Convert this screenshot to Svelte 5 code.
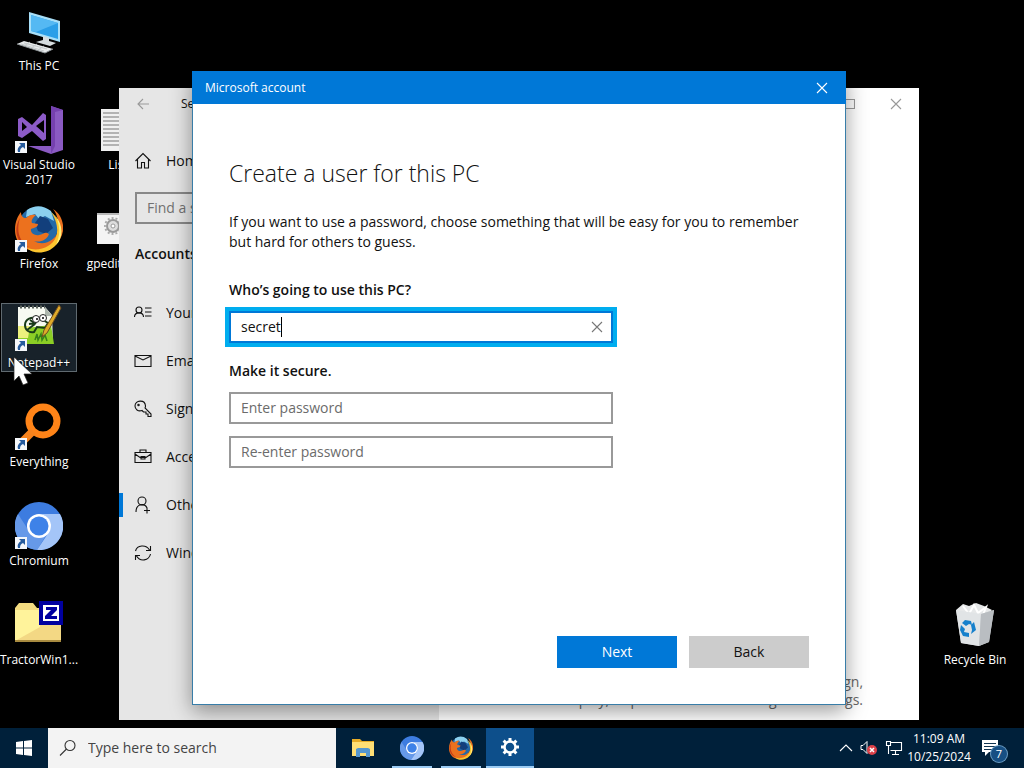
<script>
  const shortcuts = [
    { id: 'pc', label: 'This PC', col: 1, row: 1 },
    { id: 'vs', label: 'Visual Studio 2017', col: 1, row: 2, link: true },
    { id: 'firefox', label: 'Firefox', col: 1, row: 3, link: true },
    { id: 'notepad', label: 'Notepad++', col: 1, row: 4, link: true, selected: true },
    { id: 'everything', label: 'Everything', col: 1, row: 5, link: true },
    { id: 'chromium', label: 'Chromium', col: 1, row: 6, link: true },
    { id: 'folder', label: 'TractorWin1...', col: 1, row: 7 },
    { id: 'list', label: 'List', col: 2, row: 2 },
    { id: 'gpedit', label: 'gpedit-Wi...', col: 2, row: 3 }
  ];
  const nav = [
    { id: 'info', label: 'Your info' },
    { id: 'mail', label: 'Email' },
    { id: 'key', label: 'Sign-in' },
    { id: 'work', label: 'Access' },
    { id: 'other', label: 'Other users', active: true },
    { id: 'sync', label: 'Windows backup' }
  ];
  let name = $state('secret');
  let password = $state('');
  let confirm = $state('');
</script>

{#snippet firefox(size)}
  <svg width={size} height={size} viewBox="0 0 48 48" aria-hidden="true">
    <circle cx="23" cy="22" r="20" fill="#2469a8" />
    <path d="M12 5Q24-3 36 6l3 10-9-5-6 3-4-5-9 3z" fill="#8bd0ef" />
    <path d="M25 11l8 3 5 9-7 6-8-3-3-8z" fill="#123f7c" />
    <path d="M6 7c0 4 2 6 5 6 3-3 6-4 10-3-4 3-5 6-4 8l6 1c0 3-4 4-7 5-1 4 4 7 8 6 5-1 6-4 10-1-2 6-9 9-15 7 10 6 22-1 24-10 2-8-1-17-5-22 8 5 11 14 10 22-2 12-12 19-24 19C9 48 0 37 0 25 0 16 3 11 6 7z" fill="#ec711e" />
    <path d="M36 7c11 9 13 24 5 33-8 9-22 10-29 3 12 4 25-1 29-11 3-8 0-18-5-25z" fill="#fdc52e" />
    <path d="M40 10c9 11 8 23 1 30 4-9 5-19-1-30z" fill="#fff07a" />
    <path d="M5 13c-4 13-1 23 9 29C1 39-2 24 5 13z" fill="#c33c17" />
  </svg>
{/snippet}

{#snippet chromium(size)}
  <svg width={size} height={size} viewBox="0 0 48 48" aria-hidden="true">
    <circle cx="24" cy="24" r="24" fill="#3d7ce0" />
    <path d="M3 12A24 24 0 0 0 22 48L33 30 14 29z" fill="#6699e8" />
    <path d="M24 12h21A24 24 0 0 1 22 48l12-18a12 12 0 0 0-10-18z" fill="#a4c5f8" />
    <circle cx="24" cy="24" r="12" fill="#fff" />
    <circle cx="24" cy="24" r="9.5" fill="#3e82e8" />
  </svg>
{/snippet}

{#snippet picture(id)}
  {#if id === 'firefox'}
    {@render firefox(48)}
  {:else if id === 'chromium'}
    {@render chromium(48)}
  {:else}
    <svg width="48" height="48" viewBox="0 0 48 48" aria-hidden="true">
      {#if id === 'pc'}
        <path d="M14 5l31 9v21l-31-9z" fill="#a8dff8" />
        <path d="M16 8l27 8v16l-27-8z" fill="#2b9fe8" />
        <path d="M16 8l27 8-22 9-5-1z" fill="#55b9f3" />
        <path d="M28 29l6 2v3l7 2-6 3-14-4 7-2z" fill="#d5dcdf" />
        <path d="M9 34l29 8-8 4L2 37z" fill="#e8ebec" />
        <path d="M9 36l23 6M6 37l23 7M15 35l-6 4M22 37l-6 4M29 39l-6 4" stroke="#c4c9cb" stroke-width="1" />
        <path d="M2 37l28 9 8-4" fill="none" stroke="#8a9194" />
      {:else if id === 'vs'}
        <path d="M36 0l12 4v40l-12 4-23-8h23z" fill="#8a5ac2" />
        <path d="M36 0l12 4-8 2v34l-4 8z" fill="#7541af" />
        <path d="M3 13l4-2 10 8 11-12 3 2v24l-3 2-11-10-10 7-4-2z M7 16v9l5-4z M21 20l8 7V14z" fill="#8c5bc7" fill-rule="evenodd" />
      {:else if id === 'notepad'}
        <path d="M3 3h27l7 8 1 29H3z" fill="#f7faf2" />
        <path d="M3 25l33-4 3 19H3z" fill="#8bce25" />
        <path d="M3 22h12l-2 12H3z" fill="#edf17d" />
        <path d="M30 3v9h7z" fill="#acb6ad" />
        <path d="M5 3h25" stroke="#59615b" stroke-width="3" stroke-dasharray="2 2" />
        <path d="M10 21c0-6 7-9 12-6M10 21c0 5 4 8 9 7l3-5 8 1 3-5-5-3M14 20l7-1M15 16l6 4M12 26l8-6" fill="none" stroke="#183b18" stroke-width="2" />
        <circle cx="21" cy="15" r="3.5" fill="#fff" stroke="#222" /><circle cx="28" cy="14" r="3.5" fill="#fff" stroke="#222" />
        <circle cx="22" cy="15" r="1" /><circle cx="28" cy="14" r="1" />
        <path d="M20 36l2-6 1 6 3-6 1 6 3-5 2 6" fill="none" stroke="#37801a" stroke-width="1.5" />
        <path d="M44 1l2 3-14 25-5 4 2-7z" fill="#dfaa2a" stroke="#714e20" />
      {:else if id === 'everything'}
        <circle cx="28" cy="18" r="14" fill="none" stroke="#ff8418" stroke-width="7" />
        <path d="M18 28L8 38" stroke="#f7831d" stroke-width="8" />
      {:else if id === 'folder'}
        <path d="M0 7l4-5h14l4 5h24v34H0z" fill="#f4dc80" />
        <path d="M0 9h46v32H0z" fill="#f3d884" />
        <path d="M0 9h25v17L0 40z" fill="#fff39b" />
        <path d="M0 40h46" stroke="#a88b40" stroke-width="2" />
        <path d="M24 0h24v24H24z" fill="#0000a0" />
        <path d="M28 4h16v16H28z" fill="#fff" />
        <path d="M31 6h11v3l-6 6h6v3H30v-3l6-6h-5z" fill="#0000a0" />
      {:else if id === 'list'}
        <path d="M7 3h34v42H7z" fill="#f0f0f0" />
        <path d="M9 7h30M9 11h30M9 15h30M9 19h30M9 23h30M9 27h30M9 31h30M9 35h30M9 39h30" stroke="#777" />
      {:else if id === 'gpedit'}
        <path d="M3 8h38v31H3z" fill="#f4f4f4" />
        <path d="M3 8h38v2H3z" fill="#b8b8b8" />
        <circle cx="19" cy="21" r="6" fill="#ddd" stroke="#999" stroke-width="2" />
        <circle cx="19" cy="21" r="8" fill="none" stroke="#aaa" stroke-width="2" stroke-dasharray="2 2" />
        <circle cx="19" cy="21" r="2" fill="#fff" stroke="#999" />
      {/if}
    </svg>
  {/if}
{/snippet}

{#snippet navIcon(id)}
  <svg class="line" width="18" height="18" viewBox="0 0 18 18" aria-hidden="true">
    {#if id === 'home'}
      <path d="M1.5 9L9 1.5 16.500 9M3.500 7v9h4v-5.500h3V16h4V7" />
    {:else if id === 'info'}
      <circle cx="5" cy="6" r="3" /><path d="M.5 13c0-5.500 9-5.500 9 0M11 4h6.500M11 8h6.500M11 12h6.500" />
    {:else if id === 'mail'}
      <path d="M1 3.500h16v11H1zM1 4l8 4 8-4" />
    {:else if id === 'key'}
      <path d="M8 10.500C4 12 1 9 1 6c0-6 10-7 10.500 0 0 1-.2 1.500-.5 2l6 6v2.500h-3V14h-2v-2H9.500z" /><circle cx="4.500" cy="5" r=".7" />
    {:else if id === 'work'}
      <path d="M1 4.500h16v10H1zM6 4.500V2h6v2.500M1 6l5 3.500h6L17 6M7 8.500h4v2.500H7z" />
    {:else if id === 'other'}
      <circle cx="8" cy="5" r="4" /><path d="M2 16c0-9 9-9 11-4M10 14.500h6M13 11.500v6" />
    {:else if id === 'sync'}
      <path d="M1.500 7C3 1 12 0 15.500 6M16.500 2v4.500H12M16.500 10C15 17 6 18 2.500 12M1.500 16v-4.500H6" />
    {/if}
  </svg>
{/snippet}

{#snippet cross(size)}
  <svg class="line" width={size} height={size} viewBox="0 0 12 12" aria-hidden="true"><path d="M1 1l10 10M11 1L1 11" /></svg>
{/snippet}

<div class="desktop">
  <div class="shortcuts">
    {#each shortcuts as s}
      <button class="shortcut" class:selected={s.selected} style:grid-column={s.col} style:grid-row={s.row}>
        <span class="art">
          {@render picture(s.id)}
          {#if s.link}
            <svg class="arrow" width="12" height="12" viewBox="0 0 12 12" aria-hidden="true">
              <path d="M0 0h12v12H0z" fill="#f5f7fa" />
              <path d="M4 2h6v6L8 6c-2 1-3 2-3 5H3C2 8 3 6 6 4z" fill="#265b9d" />
            </svg>
          {/if}
        </span>
        <span>{s.label}</span>
      </button>
    {/each}
  </div>

  <button class="shortcut bin">
    <span class="art">
      <svg width="48" height="48" viewBox="0 0 48 48" aria-hidden="true">
        <path d="M5 9l7-6 6 2 7-3 8 3 8 4-7 7H14z" fill="#e6e8e9" />
        <path d="M12 5l6 8 5-9 4 8 8-6-3 8" fill="none" stroke="#fff" stroke-width="2" />
        <path d="M5 9l9 4h16l13-4-5 32-10 4-18-3z" fill="#ced2d5" />
        <path d="M5 9l25 4-2 32-18-3z" fill="#e1e4e6" />
        <path d="M30 13l13-4-5 32-10 4z" fill="#b9bdc1" />
        <path d="M11 22l3-3 6 1 1 4-3-1-3 2zM23 21l2 8-5 4 1-4-1-5zM10 24l4 4-1 3 5 1v4l-6-1-3-6z" fill="#1680cc" />
      </svg>
    </span>
    <span>Recycle Bin</span>
  </button>

  <section class="settings" aria-label="Settings">
    <aside>
      <div class="top"><svg class="line" width="12" height="12" viewBox="0 0 12 12" aria-hidden="true"><path d="M12 6H1M6 1L1 6l5 5" /></svg><span>Settings</span></div>
      <button class="nav home">{@render navIcon('home')}Home</button>
      <input class="find" type="text" aria-label="Find a setting" placeholder="Find a setting" />
      <h2>Accounts</h2>
      <nav>
        {#each nav as n}
          <button class="nav" class:active={n.active}>{@render navIcon(n.id)}{n.label}</button>
        {/each}
      </nav>
    </aside>
    <div class="content">
      <div class="controls">
        <button aria-label="Maximize"><svg class="line" width="10" height="10" viewBox="0 0 10 10"><path d="M.5.5h9v9h-9z" /></svg></button>
        <button aria-label="Close settings">{@render cross(12)}</button>
      </div>
      <p>Set up this device as a kiosk — this could be a digital sign, interactive display, or public browser among other things.</p>
    </div>
  </section>

  <section class="dialog" role="dialog" aria-labelledby="dialog-title">
    <header><span>Microsoft account</span><button aria-label="Close">{@render cross(12)}</button></header>
    <form onsubmit={(e) => e.preventDefault()}>
      <h1 id="dialog-title">Create a user for this PC</h1>
      <p>If you want to use a password, choose something that will be easy for you to remember but hard for others to guess.</p>
      <label for="user">Who’s going to use this PC?</label>
      <div class="field focused">
        <span class="entry"><input id="user" type="text" bind:value={name} /><i class="caret"></i></span>
        <button type="button" aria-label="Clear" onclick={() => (name = '')}>{@render cross(12)}</button>
      </div>
      <label class="secure" for="pass">Make it secure.</label>
      <div class="passwords">
        <input class="field" id="pass" type="password" placeholder="Enter password" bind:value={password} />
        <input class="field" type="password" aria-label="Re-enter password" placeholder="Re-enter password" bind:value={confirm} />
      </div>
      <div class="actions"><button class="next">Next</button><button type="button">Back</button></div>
    </form>
  </section>

  <svg class="pointer" width="20" height="30" viewBox="0 0 20 30" aria-hidden="true"><path d="M1 1v24l5-5 4 9 5-2-4-9h8z" fill="#fff" stroke="#222" stroke-width=".7" /></svg>

  <footer>
    <button class="start" aria-label="Start"><svg width="16" height="16" viewBox="0 0 16 16"><path d="M0 2l7-1v6.500H0zM8 1l8-1v7.500H8zM0 8.500h7V15l-7-1zM8 8.500h8V16l-8-1z" fill="#fff" /></svg></button>
    <div class="search">
      <svg class="line" width="18" height="18" viewBox="0 0 18 18" aria-hidden="true"><circle cx="11" cy="6.500" r="5" /><path d="M7.500 10L1 16.500" /></svg>
      <input type="search" aria-label="Type here to search" placeholder="Type here to search" />
    </div>
    <div class="apps">
      <button aria-label="File Explorer"><svg width="22" height="20" viewBox="0 0 22 20"><path d="M0 1h8l2 2h12v15H0z" fill="#e7ac27" /><path d="M0 4h22v14H0z" fill="#ffdf75" /><path d="M4 19v-8l2-1h10l2 1v8h-4v-4H8v4z" fill="#5597cf" /></svg></button>
      <button class="running" aria-label="Chromium">{@render chromium(24)}</button>
      <button class="running" aria-label="Firefox">{@render firefox(24)}</button>
      <button class="running current" aria-label="Settings">
        <svg width="20" height="20" viewBox="0 0 20 20"><circle cx="10" cy="10" r="5.500" fill="none" stroke="#fff" stroke-width="2.500" /><path d="M10 1v3M10 16v3M1 10h3M16 10h3M3.600 3.600l2.200 2.200M14.200 14.200l2.200 2.200M3.600 16.400l2.200-2.200M14.200 5.800l2.200-2.200" stroke="#fff" stroke-width="3" /></svg>
      </button>
    </div>
    <div class="tray">
      <svg class="line" width="14" height="14" viewBox="0 0 14 14" aria-hidden="true"><path d="M1 10l6-6 6 6" /></svg>
      <svg width="18" height="16" viewBox="0 0 18 16" aria-hidden="true"><path d="M1 5.500h2l4-4v12l-4-4H1z" fill="none" stroke="#fff" /><circle cx="12" cy="10" r="5" fill="#dc4048" /><path d="M10 8l4 4M14 8l-4 4" stroke="#fff" stroke-width="1.500" /></svg>
      <svg class="line" width="18" height="16" viewBox="0 0 18 16" aria-hidden="true"><path d="M5 2.500h11.500v8H5.500M10.500 11v3M7 14.500h7M1.500 1.500h4v4h-4zM3.500 6v8" /></svg>
      <time><span>11:09 AM</span><span>10/25/2024</span></time>
      <button class="notes" aria-label="7 notifications">
        <svg width="18" height="18" viewBox="0 0 18 18"><path d="M1 1h16v12H8l-4 4v-4H1z" fill="#fff" /><path d="M3 4.500h12M3 7.500h12M3 10.500h9" stroke="#123653" /></svg>
        <span>7</span>
      </button>
    </div>
  </footer>
</div>

<style>
  :global(body) { margin: 0; background: #000; }
  .desktop { position: relative; min-height: 100vh; overflow: hidden; background: #000; color: #111; font: 14px/20px "Open Sans", "Noto Sans", sans-serif; }
  * { box-sizing: border-box; }
  button, input { font: inherit; color: inherit; border: 0; border-radius: 0; margin: 0; padding: 0; background: none; }
  input { outline: none; }
  svg { display: block; flex: none; }
  h1, h2, p { margin: 0; font-weight: 400; }
  .line { fill: none; stroke: currentColor; stroke-width: 1.1; }

  .shortcuts { display: grid; grid-template-columns: 76px 76px; grid-template-rows: repeat(7, 69px); gap: 30px 3px; padding: 6px 1px; }
  .shortcut { width: 76px; display: flex; flex-direction: column; align-items: center; align-self: start; min-height: 69px; border: 1px solid transparent; color: #fff; font-size: 12px; line-height: 15px; gap: 3px; text-shadow: 0 1px 2px #000; white-space: nowrap; }
  .shortcut span { white-space: normal; }
  .selected { background: #18222a; border-color: #606a70; }
  .art { position: relative; }
  .arrow { position: absolute; left: 0; bottom: 1px; }
  .bin { position: absolute; right: 11px; bottom: 99px; }

  .settings { position: absolute; inset: 88px 105px 48px 119px; display: grid; grid-template-columns: 320px 1fr; background: #fff; }
  aside { background: #e6e6e6; overflow: hidden; }
  .top { display: flex; align-items: center; gap: 32px; height: 32px; padding-left: 18px; font-size: 12px; }
  .top .line { color: #999; }
  .nav { display: flex; align-items: center; gap: 14px; width: 100%; height: 48px; padding-left: 15px; }
  .home { margin-top: 17px; }
  .find { display: block; width: 288px; height: 32px; margin: 7px 16px 0; padding: 0 10px 2px; border: 2px solid #888; }
  .find::placeholder { color: #717171; }
  h2 { font-size: 14px; line-height: 20px; font-weight: 600; margin: 20px 16px 25px; }
  nav { display: flex; flex-direction: column; }
  .active { background: linear-gradient(#0078d7, #0078d7) no-repeat 0 center / 4px 24px; }
  .content { display: flex; flex-direction: column; justify-content: space-between; }
  .controls { display: flex; justify-content: flex-end; color: #999; }
  .controls button { width: 46px; height: 32px; display: grid; place-items: center; }
  .content p { width: 400px; margin-left: 24px; padding-bottom: 11px; line-height: 18px; color: #666; text-align: right; }

  .dialog { position: absolute; inset: 71px 178px 63px 192px; display: flex; flex-direction: column; background: #fff; border: 1px solid #387da8; box-shadow: 0 6px 20px #0006; }
  header { display: flex; justify-content: space-between; align-items: center; height: 33px; margin: -1px -1px 0; padding-left: 13px; background: #0078d7; color: #fff; font-size: 12px; }
  header button { width: 48px; height: 32px; display: grid; place-items: center; }
  form { display: flex; flex-direction: column; flex: 1; padding: 51px 36px 36px; }
  h1 { font-size: 23px; line-height: 36px; font-weight: 300; }
  form p { margin-top: 21px; }
  label { margin-top: 28px; font-weight: 600; }
  .field { width: 384px; max-width: 100%; height: 32px; padding: 0 10px 2px; border: 2px solid #999; flex: none; }
  .field::placeholder { color: #6b6b6b; opacity: 1; }
  .focused { display: flex; align-items: center; justify-content: space-between; margin-top: 11px; padding: 0 7px 0 10px; border-color: #0078d7; box-shadow: 0 0 0 4px #00adef; }
  .focused button { width: 14px; height: 24px; color: #777; display: grid; place-items: center; }
  .entry { display: flex; align-items: center; }
  .entry input { field-sizing: content; min-width: 2px; }
  .caret { width: 1px; height: 20px; background: #000; }
  .secure { margin-top: 18px; }
  .passwords { display: flex; flex-direction: column; gap: 12px; margin-top: 11px; }
  .actions { display: flex; justify-content: flex-end; gap: 12px; margin-top: auto; }
  .actions button { width: 120px; height: 32px; background: #ccc; }
  .actions .next { background: #0078d7; color: #fff; }
  .pointer { position: absolute; left: 13px; top: 356px; }

  footer { position: absolute; inset: auto 0 0; height: 40px; display: flex; background: #00203a; color: #fff; }
  .start { width: 48px; display: grid; place-items: center; }
  .search { display: flex; align-items: center; width: 288px; gap: 11px; padding-left: 11px; background: #f3f3f3; color: #333; }
  .search input { flex: 1; min-width: 0; }
  .search input::placeholder { color: #444; opacity: 1; }
  .apps { display: flex; padding-left: 3px; gap: 1px; }
  .apps button { width: 48px; display: grid; place-items: center; }
  .running { background: linear-gradient(#9cccf4, #9cccf4) no-repeat center bottom / 40px 2px; }
  .apps .current { background: #0d4f8b; border-bottom: 2px solid #9cccf4; }
  .tray { display: flex; align-items: center; gap: 7px; margin-left: auto; padding-right: 17px; }
  time { display: flex; flex-direction: column; align-items: center; width: 58px; font-size: 12px; line-height: 18px; }
  .notes { position: relative; width: 26px; height: 24px; margin-left: 6px; }
  .notes span { position: absolute; right: 0; bottom: -2px; width: 16px; height: 16px; border-radius: 8px; background: #174f83; box-shadow: 0 0 0 1px #6d9fc5; font-size: 11px; line-height: 16px; }
</style>
